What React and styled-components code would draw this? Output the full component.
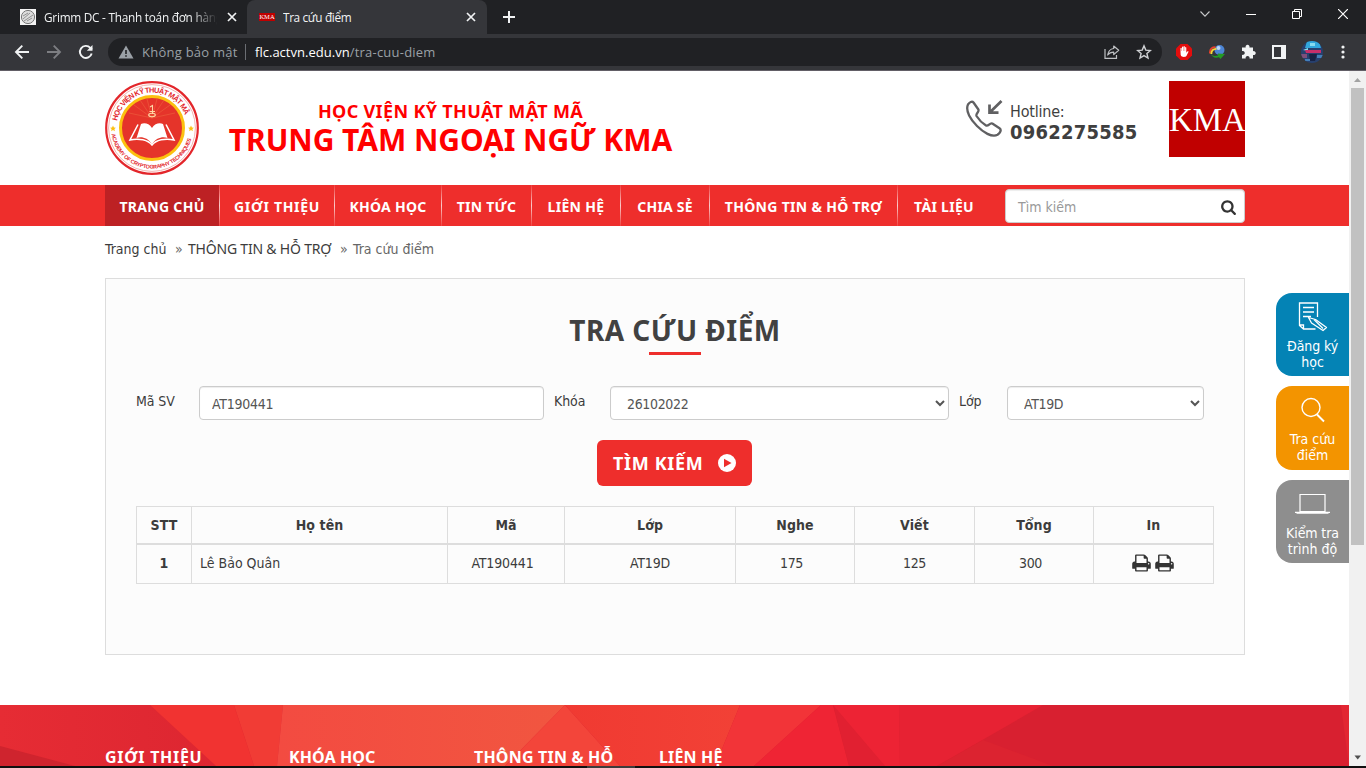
import React from 'react';
import styled, { createGlobalStyle } from 'styled-components';

const Global = createGlobalStyle`
  *, *::before, *::after { box-sizing: border-box; }
  body { margin: 0; background: #fff; overflow: hidden; }
`;

const TAHOMA = '"DejaVu Sans Condensed", "DejaVu Sans", "Noto Sans", sans-serif';
const CAPS = '"Noto Sans", "Open Sans", sans-serif';
const SEGOE = '"Open Sans", "Noto Sans", sans-serif';
const RED = '#ee2e2c';

const Screen = styled.div`
  width: 1366px;
  height: 768px;
  display: flex;
  flex-direction: column;
  overflow: hidden;
  font-family: ${TAHOMA};
  font-size: 14px;
  color: #3c3c3c;
`;

const T = styled.span`
  letter-spacing: ${(p) => p.$ls || 0}px;
  white-space: nowrap;
`;

/* ---------- browser chrome ---------- */
const TabStrip = styled.div`
  height: 34px;
  flex: none;
  display: flex;
  background: #202124;
  font-family: ${SEGOE};
  font-size: 11.8px;
  color: #f1f3f4;
`;
const Tab = styled.div`
  width: ${(p) => p.$w}px;
  height: 34px;
  display: flex;
  align-items: center;
  padding: 0 ${(p) => p.$pr}px 0 ${(p) => p.$pl}px;
  gap: 8px;
  background: ${(p) => (p.$active ? '#35363a' : 'transparent')};
  border-radius: 8px 8px 0 0;
`;
const TabTitle = styled.div`
  flex: 1;
  overflow: hidden;
  white-space: nowrap;
  line-height: 20px;
  margin-top: -1px;
  letter-spacing: ${(p) => p.$ls}px;
  ${(p) => p.$fade && 'mask-image: linear-gradient(90deg, #000 84%, transparent 99%);'}
`;
const KmaFavicon = styled.div`
  width: 16px;
  height: 8px;
  background: #c00000;
  color: #fff;
  font: 6.5px/8px "Liberation Serif", serif;
  text-align: center;
`;
const NewTab = styled.div`
  width: 44px;
  display: flex;
  align-items: center;
  justify-content: center;
`;
const WindowButtons = styled.div`
  margin-left: auto;
  display: flex;
  align-items: center;
  padding: 0 0 6px;
`;
const WindowButton = styled.div`
  width: 46px;
  display: flex;
  justify-content: center;
`;
const Toolbar = styled.div`
  height: 37px;
  flex: none;
  display: flex;
  align-items: center;
  padding: 0 15px 0 14px;
  background: #35363a;
  border-bottom: 1px solid #625e66;
`;
const NavButtons = styled.div`
  display: flex;
  gap: 16px;
  margin-right: 14px;
`;
const Omnibox = styled.div`
  width: 1054px;
  height: 28px;
  border-radius: 14px;
  background: #202124;
  display: flex;
  align-items: center;
  padding: 0 10px;
  font-family: ${SEGOE};
  font-size: 13px;
  color: #9aa0a6;
`;
const Host = styled(T)`color: #fff;`;
const InsecureLabel = styled(T)`margin-left: 8px; width: 97px;`;
const OmniDivider = styled.div`
  width: 1px;
  height: 16px;
  margin: 0 9px 0 6px;
  background: #6b6e73;
`;
const OmniActions = styled.div`
  margin-left: auto;
  display: flex;
  gap: 16px;
`;
const Extensions = styled.div`
  margin-left: 13px;
  display: flex;
  align-items: center;
  gap: 15.5px;
`;

/* ---------- page ---------- */
const Viewport = styled.div`
  flex: 1;
  min-height: 0;
  display: flex;
`;
const Page = styled.div`
  position: relative;
  width: 1349px;
  display: flex;
  flex-direction: column;
  overflow: hidden;
`;
const Container = styled.div`
  width: 1140px;
  margin-left: 105px;
`;
const Header = styled(Container)`
  height: 114px;
  flex: none;
  display: flex;
  padding-top: 10px;
`;
const Titles = styled.div`
  width: 503px;
  padding-top: 19px;
  text-align: center;
  color: #ff0000;
  font-weight: bold;
  font-family: ${CAPS};
`;
const Institute = styled.div`font-size: 18px; line-height: 22px;`;
const Centre = styled.div`font-size: 30px; line-height: 36px;`;
const Hotline = styled.div`
  width: 204px;
  margin-left: 263px;
  display: flex;
  gap: 7px;
  padding-top: 19px;
`;
const HotlineText = styled.div`
  color: #3f3f3f;
  font-size: 16px;
  line-height: 21px;
  padding-top: 1px;
  display: flex;
  flex-direction: column;
`;
const Phone = styled(T)`font-size: 20px; font-weight: bold;`;
const KmaLogo = styled.div`
  width: 76px;
  height: 76px;
  background: #c00000;
  color: #fff;
  font: 33px/78px "Liberation Serif", serif;
  letter-spacing: -.1px;
  text-align: center;
  white-space: nowrap;
`;

const MenuBar = styled.nav`
  height: 41px;
  flex: none;
  background: ${RED};
`;
const MenuRow = styled(Container)`
  display: flex;
  height: 41px;
`;
const MenuItem = styled.div`
  width: ${(p) => p.$w}px;
  display: flex;
  align-items: center;
  justify-content: center;
  padding-top: 2px;
  color: #fff;
  font-family: ${CAPS};
  font-weight: bold;
  background: ${(p) => (p.$active ? '#bd2124' : 'transparent')};
`;
const MenuDivider = styled.div`
  width: 1px;
  background: linear-gradient(rgba(255,255,255,.1), rgba(255,255,255,.75) 50%, rgba(255,255,255,.1));
`;
const SearchBox = styled.div`
  width: 240px;
  height: 34px;
  margin: 4px 0 0 auto;
  padding: 2px 8px 0 12px;
  display: flex;
  align-items: center;
  justify-content: space-between;
  background: #fff;
  border: 1px solid #ccc;
  border-radius: 4px;
  box-shadow: inset 0 1px 1px rgba(0,0,0,.075);
  color: #999;
`;
const Crumbs = styled(Container)`
  height: 52px;
  flex: none;
  display: flex;
  padding-top: 13px;
  line-height: 20px;
`;
const Crumb = styled(T)`
  width: ${(p) => p.$w}px;
  color: ${(p) => (p.$last ? '#666' : '#3c3c3c')};
  font-family: ${(p) => (p.$caps ? CAPS : TAHOMA)};
`;
const CrumbSep = styled.span`width: 13px; color: #666;`;

const Panel = styled(Container)`
  height: 377px;
  flex: none;
  background: #fcfcfc;
  border: 1px solid #ddd;
  padding: 0 30px;
`;
const Heading = styled.h1`
  margin: 0;
  height: 76px;
  padding-top: 31px;
  font-family: ${CAPS};
  font-size: 28px;
  line-height: 40px;
  color: #414141;
  display: flex;
  flex-direction: column;
  align-items: center;
  &::after {
    content: "";
    width: 52px;
    height: 3px;
    flex: none;
    margin-top: 2px;
    background: ${RED};
  }
`;
const Form = styled.div`
  display: flex;
  height: 34px;
  margin-top: 31px;
`;
const Label = styled.label`
  width: ${(p) => p.$w}px;
  padding-top: 5px;
  line-height: 20px;
  letter-spacing: -.1px;
`;
const controlCss = (p) => `
  width: ${p.$w}px;
  height: 34px;
  margin: 0 10px 0 0;
  padding: 8px 12px 6px;
  border: 1px solid #ccc;
  border-radius: 4px;
  background: #fff;
  box-shadow: inset 0 1px 1px rgba(0,0,0,.075);
  color: #555;
  font: 14px ${TAHOMA};
  letter-spacing: -.25px;
  outline: none;
`;
const Input = styled.input`${controlCss}`;
const Select = styled.select`${controlCss} padding: 7px 0 5px 12px; letter-spacing: -.35px;`;
const SubmitRow = styled.div`
  display: flex;
  justify-content: center;
  margin: 20px 0;
  padding-right: 1px;
`;
const Submit = styled.button`
  width: 155px;
  height: 46px;
  padding: 0 16px;
  display: flex;
  align-items: center;
  justify-content: space-between;
  border: 0;
  border-radius: 6px;
  background: ${RED};
  color: #fff;
  font: bold 18px/24px ${CAPS};
  svg { flex: none; }
`;
const Grid = styled.div`
  width: 1078px;
  display: grid;
  grid-template-columns: 55px 256px 117px 171px 119px 120px 119px 120px;
  border: 1px solid #ddd;
  border-width: 1px 0 0 1px;
`;
const Cell = styled.div`
  height: ${(p) => (p.$head ? 38 : 39)}px;
  display: flex;
  align-items: center;
  justify-content: ${(p) => (p.$left ? 'flex-start' : 'center')};
  padding: 0 ${(p) => p.$pr || 0}px ${(p) => (p.$head ? 1 : 3)}px ${(p) => (p.$left ? 8 : 0)}px;
  gap: 4px;
  font-weight: ${(p) => (p.$bold || p.$head ? 'bold' : 'normal')};
  border-right: 1px solid #ddd;
  border-bottom: ${(p) => (p.$head ? 2 : 1)}px solid #ddd;
`;

const SideTabs = styled.div`
  position: absolute;
  right: 0;
  top: 222px;
  display: flex;
  flex-direction: column;
  gap: 10px;
`;
const SideTab = styled.div`
  width: 73px;
  height: ${(p) => p.$h}px;
  padding-top: 7px;
  display: flex;
  flex-direction: column;
  align-items: center;
  border-radius: 16px 0 0 16px;
  background: ${(p) => p.$bg};
  color: #fff;
  line-height: 16px;
  svg { display: block; margin: 0 2px 4px 0; flex: none; }
`;

const Footer = styled.footer`
  position: relative;
  height: 61px;
  flex: none;
  margin-top: 50px;
`;
const FooterArt = styled.svg`
  position: absolute;
  inset: 0;
`;
const FooterRow = styled(Container)`
  position: relative;
  display: flex;
  padding-top: 42px;
  color: #fff;
  font-family: ${CAPS};
  font-weight: bold;
  font-size: 16px;
  line-height: 20px;
`;
const FooterCol = styled.div`width: ${(p) => p.$w}px;`;

const Scrollbar = styled.div`
  width: 17px;
  display: flex;
  flex-direction: column;
  align-items: center;
  background: #f1f1f1;
`;
const ScrollArrow = styled.svg`flex: none; display: block;`;
const Thumb = styled.div`width: 13px; height: 457px; background: #c1c1c1;`;
const ScrollGap = styled.div`flex: 1;`;
const Taskbar = styled.div`
  height: 2px;
  flex: none;
  background: linear-gradient(90deg, #101010 587px, #3c3c3c 587px 635px, #101010 635px);
`;

const Close = () => (
  <svg width="10" height="10" viewBox="0 0 10 10" stroke="#f1f3f4" strokeWidth="1.7"><path d="M1 1l8 8M9 1L1 9" /></svg>
);

const Emblem = () => (
  <svg width="94" height="94" viewBox="0 0 94 94" fontFamily="Liberation Sans, sans-serif" fontWeight="bold" fill="#e3262b">
    <circle cx="47" cy="47" r="45.800" fill="#fff" stroke="#e3262b" strokeWidth="2.200" />
    <circle cx="47" cy="47" r="43.400" fill="none" stroke="#f0a09c" strokeWidth=".8" />
    <circle cx="47" cy="47" r="31.500" fill="#e5342a" stroke="#fcc010" strokeWidth="3" />
    <g stroke="#ee6a42" strokeWidth=".5">
      <path d="M47 37L29 24M47 37L35 19M47 37L42 18M47 37L52 18M47 37L59 19M47 37L65 24M47 37L24 32M47 37L70 32" />
    </g>
    <path id="ringTop" d="M12.200 40A35.500 35.500 0 0 1 81.800 40" fill="none" />
    <path id="ringBottom" d="M6.500 53A41 41 0 0 0 87.500 53" fill="none" />
    <text fontSize="7.400"><textPath href="#ringTop" textLength="91">HỌC VIỆN KỸ THUẬT MẬT MÃ</textPath></text>
    <text fontSize="5.400"><textPath href="#ringBottom" textLength="111">ACADEMY OF CRYPTOGRAPHY TECHNIQUES</textPath></text>
    <path fill="#fcc010" d="M8 44.600l.9 1.900 2 .2-1.500 1.400.4 2.100L8 49.100l-1.800 1.100.4-2.100-1.500-1.400 2-.2zM86 44.600l.9 1.900 2 .2-1.500 1.400.4 2.100-1.800-1.100-1.800 1.100.4-2.100-1.500-1.400 2-.2z" />
    <path d="M45 26l2.500-1.500V33M44.500 30.500H50" fill="none" stroke="#ffd7a5" strokeWidth="1.100" />
    <ellipse cx="47" cy="34" rx="3.300" ry="1.700" fill="none" stroke="#ffd7a5" strokeWidth="1.100" />
    <path fill="#fff" d="M47 47c-3-5-8-5.500-11-4l-4.500 14c5-1.600 11-.5 15.500 6.500 4.500-7 10.500-8.100 15.500-6.500L58 43c-3-1.500-8-1-11 4z" />
    <path fill="none" stroke="#fff" strokeWidth="1.500" d="M33 43.500L25 59c9-2.200 18 0 22 5 4-5 13-7.200 22-5l-8-15.500" />
  </svg>
);

const HotlineIcon = () => (
  <svg width="38" height="38" viewBox="0 0 38 38" fill="none" stroke="#606062" strokeWidth="2.300" strokeLinejoin="round">
    <path d="M3 4.500C4.500 2.200 7 .8 8.500 2.500L13.400 9.500C14.500 12 10.500 13.500 11.500 16C14 20 17 23 21 25.500C23.500 26.800 24.500 22.500 27.300 23.500L34.500 28.200C37 30 35 33 32.500 34.800C27 38 18 32 12 26C6 20 0 11 3 4.500Z" />
    <path d="M36.500 1L25 12.300M24.500 4.500V12.700H33.500" strokeLinejoin="miter" strokeWidth="2.700" />
  </svg>
);

const SearchGlyph = () => (
  <svg width="15" height="16" viewBox="0 0 1664 1792" fill="#333"><path d="M1152 832q0-185-131.500-316.500t-316.500-131.500-316.500 131.500-131.500 316.500 131.500 316.500 316.500 131.500 316.500-131.500 131.500-316.500zM1664 1664q0 52-38 90t-90 38q-54 0-90-38l-343-342q-179 124-399 124-143 0-273.500-55.500t-225-150-150-225-55.500-273.500 55.500-273.500 150-225 225-150 273.500-55.500 273.500 55.500 225 150 150 225 55.500 273.500q0 220-124 399l343 343q37 37 37 90z" /></svg>
);

const PrintGlyph = () => (
  <svg width="19" height="20" viewBox="0 0 1664 1792" fill="#333"><path d="M384 1536h896v-256h-896v256zM384 896h896v-384h-160q-40 0-68-28t-28-68v-160h-640v640zM1536 960q0-26-19-45t-45-19-45 19-19 45 19 45 45 19 45-19 19-45zM1664 960v416q0 13-9.500 22.500t-22.500 9.500h-224v160q0 40-28 68t-68 28h-960q-40 0-68-28t-28-68v-160h-224q-13 0-22.500-9.500t-9.500-22.500v-416q0-79 56.500-135.500t135.500-56.500h64v-544q0-40 28-68t68-28h672q40 0 88 20t76 48l152 152q28 28 48 76t20 88v256h64q79 0 135.500 56.500t56.500 135.500z" /></svg>
);

const menu = [
  ['TRANG CHỦ', 114, 0.3], ['GIỚI THIỆU', 114, 0.7], ['KHÓA HỌC', 106, 0.25], ['TIN TỨC', 89, 0.25],
  ['LIÊN HỆ', 88, 0.3], ['CHIA SẺ', 88, 0.2], ['THÔNG TIN & HỖ TRỢ', 187, 0.3], ['TÀI LIỆU', 92, 0.3],
];
const columns = ['STT', 'Họ tên', 'Mã', 'Lớp', 'Nghe', 'Viết', 'Tổng', 'In'];

export default function App() {
  return (
    <Screen>
      <Global />
      <TabStrip>
        <Tab $w={247} $pl={20} $pr={10}>
          <svg width="16" height="16" viewBox="0 0 16 16"><path fill="#f4f4f4" d="M0 0h16v16H0z" /><circle cx="8" cy="8" r="6.600" fill="#ddd" stroke="#777" /><path d="M3 10l7-6M4 12l9-6M3 7l5-3M7 12l5-3" stroke="#888" strokeWidth=".9" /></svg>
          <TabTitle $fade $ls={-0.25}>Grimm DC - Thanh toán đơn hàng</TabTitle>
          <Close />
        </Tab>
        <Tab $active $w={240} $pl={12} $pr={11}>
          <KmaFavicon>KMA</KmaFavicon>
          <TabTitle $ls={-0.35}>Tra cứu điểm</TabTitle>
          <Close />
        </Tab>
        <NewTab>
          <svg width="12" height="12" viewBox="0 0 12 12" stroke="#f1f3f4" strokeWidth="2"><path d="M6 0v12M0 6h12" /></svg>
        </NewTab>
        <WindowButtons>
          <WindowButton><svg width="10" height="6" viewBox="0 0 10 6" fill="none" stroke="#c8c9cb" strokeWidth="1.100"><path d="M.5.5L5 5.200 9.500.5" /></svg></WindowButton>
          <WindowButton><svg width="10" height="2" viewBox="0 0 10 2"><path fill="#fff" d="M0 1h10v1H0z" /></svg></WindowButton>
          <WindowButton><svg width="10" height="10" viewBox="0 0 10 10" fill="none" stroke="#fff"><path d="M.5 2.500h7v7h-7zM2.500 2.500v-2h7v7h-2" /></svg></WindowButton>
          <WindowButton><svg width="10" height="10" viewBox="0 0 10 10" stroke="#fff" strokeWidth="1.200"><path d="M0 0l10 10M10 0L0 10" /></svg></WindowButton>
        </WindowButtons>
      </TabStrip>

      <Toolbar>
        <NavButtons>
          <svg width="16" height="16" viewBox="0 0 16 16" fill="none" stroke="#f1f3f4" strokeWidth="1.900"><path d="M15 8H2.500M8.300 1.700L2 8l6.300 6.300" /></svg>
          <svg width="16" height="16" viewBox="0 0 16 16" fill="none" stroke="#7d7e82" strokeWidth="1.900"><path d="M1 8h12.500M7.700 1.700L14 8l-6.300 6.300" /></svg>
          <svg width="16" height="16" viewBox="0 0 16 16" fill="none" stroke="#f1f3f4" strokeWidth="1.900"><path d="M13.700 9.500A6 6 0 1 1 12.300 3.800L14 5.500" /><path d="M14.500 1v5.700H8.800z" fill="#f1f3f4" stroke="none" /></svg>
        </NavButtons>
        <Omnibox>
          <svg width="16" height="14" viewBox="0 0 16 14"><path d="M8 .5L15.500 13.500H.5z" fill="#9aa0a6" /><path d="M7.200 5h1.600v4H7.200zM7.200 10.200h1.600v1.600H7.200z" fill="#202124" /></svg>
          <InsecureLabel $ls={0.25}>Không bảo mật</InsecureLabel>
          <OmniDivider />
          <Host $ls={0.02}>flc.actvn.edu.vn</Host>
          <T $ls={0.22}>/tra-cuu-diem</T>
          <OmniActions>
            <svg width="16" height="16" viewBox="0 0 16 16" fill="none" stroke="#bfc1c4" strokeWidth="1.200"><path d="M1 5v9.400h11.500V11" /><path d="M9.700 2l5 4.300-5 4.300V8.200C6.500 8.200 5 9.200 3.700 11 4.200 7.500 6 5 9.700 4.500z" strokeLinejoin="round" /></svg>
            <svg width="16" height="16" viewBox="0 0 16 16" fill="none" stroke="#cfd1d4" strokeWidth="1.400"><path d="M8 1.900l1.800 4.200 4.600.4-3.500 3 1.100 4.500L8 11.600 4 14l1.100-4.500-3.500-3 4.600-.4z" /></svg>
          </OmniActions>
        </Omnibox>
        <Extensions>
          <svg width="18" height="18" viewBox="0 0 18 18"><path fill="#e40d0d" d="M5.500 1h7L17 5.500v7L12.500 17h-7L1 12.500v-7z" /><path fill="#fff" d="M5.500 8.500V5.400c0-.8 1.200-.8 1.200 0V8h.3V4.200c0-.8 1.200-.8 1.200 0V8h.3V3.700c0-.8 1.300-.8 1.300 0V8h.3V4.700c0-.8 1.200-.8 1.200 0v5l1-1.200c.7-.7 1.500-.1 1.100.5L11.400 13c-.6 1.200-5 1.500-5.700-1z" /></svg>
          <svg width="16" height="16" viewBox="0 0 16 16"><circle cx="10.500" cy="6" r="5" fill="#4d86d6" /><circle cx="9.500" cy="4" r="2" fill="#bcd7f5" /><path d="M.8 9.500C.8 5.500 3 3.200 6.500 3.200" fill="none" stroke="#e8412c" strokeWidth="1.700" /><path d="M2.300 10C2.300 7 4 4.900 7.500 4.900" fill="none" stroke="#f7d735" strokeWidth="1.900" /><path d="M1.500 9c1 3 4 3.500 7.500 2.500V9.500l7 .5-4.500 5-1.500-1.700c-4 1-7 .2-8.500-4.300z" fill="#249a24" /></svg>
          <svg width="16" height="16" viewBox="0 0 16 16" fill="#f1f3f4"><path d="M2 3.500h3.700a2 2 0 1 1 3.700 0H13v3.700a2 2 0 1 1 0 3.700v3.600H9.500a2 2 0 1 0-3.800 0H2v-3.700a2 2 0 1 0 0-3.700z" /></svg>
          <svg width="14" height="14" viewBox="0 0 14 14"><path fill="#f1f3f4" fillRule="evenodd" d="M0 0h14v14H0zM2 2v10h7V2z" /></svg>
          <svg width="22" height="22" viewBox="0 0 22 22"><clipPath id="avatar"><circle cx="11" cy="11" r="11" /></clipPath><g clipPath="url(#avatar)"><path fill="#27406e" d="M0 0h22v22H0z" /><path fill="#31a8dd" d="M6 0h12l2 7H4z" /><path fill="#86dcf0" d="M9 2h5v3H9zM2 9l5-2v3z" /><path fill="#c82f6b" d="M4 9h16v3H5z" /><path fill="#182344" d="M8 13h8l-2 7H9z" /><path fill="#7d4e7b" d="M0 13h6v4H0z" /><path fill="#447fb8" d="M16 14h6v3h-6zM4 18h5v2H4z" /></g></svg>
          <svg width="6" height="14" viewBox="-2 0 6 14" fill="#f1f3f4"><circle cx="2" cy="2" r="1.600" /><circle cx="2" cy="7" r="1.600" /><circle cx="2" cy="12" r="1.600" /></svg>
        </Extensions>
      </Toolbar>

      <Viewport>
        <Page>
          <Header>
            <Emblem />
            <Titles>
              <Institute><T $ls={0.35}>HỌC VIỆN KỸ THUẬT MẬT MÃ</T></Institute>
              <Centre><T $ls={-0.05}>TRUNG TÂM NGOẠI NGỮ KMA</T></Centre>
            </Titles>
            <Hotline>
              <HotlineIcon />
              <HotlineText>
                <T $ls={-0.2}>Hotline:</T>
                <Phone $ls={0.22}>0962275585</Phone>
              </HotlineText>
            </Hotline>
            <KmaLogo>KMA</KmaLogo>
          </Header>

          <MenuBar>
            <MenuRow>
              {menu.map(([label, w, ls], i) => (
                <React.Fragment key={label}>
                  {i > 0 && <MenuDivider />}
                  <MenuItem $w={w} $active={i === 0}><T $ls={ls}>{label}</T></MenuItem>
                </React.Fragment>
              ))}
              <SearchBox><T>Tìm kiếm</T><SearchGlyph /></SearchBox>
            </MenuRow>
          </MenuBar>

          <Crumbs>
            <Crumb $w={70}>Trang chủ</Crumb>
            <CrumbSep>»</CrumbSep>
            <Crumb $w={152} $caps $ls={-0.2}>THÔNG TIN & HỖ TRỢ</Crumb>
            <CrumbSep>»</CrumbSep>
            <Crumb $w={90} $last>Tra cứu điểm</Crumb>
          </Crumbs>

          <Panel>
            <Heading><T $ls={0.45}>TRA CỨU ĐIỂM</T></Heading>
            <Form>
              <Label $w={63}>Mã SV</Label>
              <Input $w={345} defaultValue="AT190441" />
              <Label $w={56}>Khóa</Label>
              <Select $w={339}><option>26102022</option></Select>
              <Label $w={48}>Lớp</Label>
              <Select $w={197}><option>AT19D</option></Select>
            </Form>
            <SubmitRow>
              <Submit>
                <T $ls={0.65}>TÌM KIẾM</T>
                <svg width="18" height="18" viewBox="0 0 18 18"><circle cx="9" cy="9" r="9" fill="#fff" /><path d="M6 4.700l7.500 4.300L6 13.300z" fill={RED} /></svg>
              </Submit>
            </SubmitRow>
            <Grid>
              {columns.map((c) => <Cell key={c} $head><T $ls={0.1}>{c}</T></Cell>)}
              <Cell $bold>1</Cell>
              <Cell $left><T>Lê Bảo Quân</T></Cell>
              <Cell $pr={7}><T $ls={-0.15}>AT190441</T></Cell>
              <Cell><T $ls={-0.15}>AT19D</T></Cell>
              <Cell $pr={7}><T $ls={-0.3}>175</T></Cell>
              <Cell><T $ls={-0.3}>125</T></Cell>
              <Cell $pr={7}><T $ls={-0.3}>300</T></Cell>
              <Cell $pr={1}><PrintGlyph /><PrintGlyph /></Cell>
            </Grid>
          </Panel>

          <Footer>
            <FooterArt width="1349" height="61" viewBox="0 705 1349 61" preserveAspectRatio="none">
              <defs>
                <linearGradient id="deep"><stop stopColor="#e62c34" /><stop offset="1" stopColor="#dd2631" /></linearGradient>
                <linearGradient id="coral"><stop stopColor="#f34b41" /><stop offset="1" stopColor="#f15640" /></linearGradient>
                <linearGradient id="warm"><stop stopColor="#f03a32" /><stop offset="1" stopColor="#f24136" /></linearGradient>
              </defs>
              <path fill="#d82030" d="M0 705h1349v61H0z" />
              <path fill="url(#deep)" d="M0 705h150l66 61H0z" />
              <path fill="#cf242e" d="M0 746l75 20H0z" />
              <path fill="#f13331" d="M150 705h84l20 61h-38z" />
              <path fill="#f13c35" d="M234 705h49l-6 61h-23z" />
              <path fill="url(#coral)" d="M283 705h282l-60 61H277z" />
              <path fill="#f3453a" d="M565 705l55 61H505z" />
              <path fill="url(#warm)" d="M565 705h175l-25 61h-95z" />
              <path fill="#f23438" d="M740 705h81l-67 61h-39z" />
              <path fill="#ef2434" d="M821 705h12l16 61h-95z" />
              <path fill="#e12031" d="M833 705l52 61h-36z" />
              <path fill="#ed2334" d="M833 705h66l1 61h-15z" />
              <path fill="#e72233" d="M899 705h144l-106 61h-37z" />
              <path fill="#dc2330" d="M983 740l70 26H937z" />
              <path fill="#e22632" d="M1341 705h8v61z" />
            </FooterArt>
            <FooterRow>
              <FooterCol $w={184}><T $ls={0.7}>GIỚI THIỆU</T></FooterCol>
              <FooterCol $w={185}><T $ls={0.1}>KHÓA HỌC</T></FooterCol>
              <FooterCol $w={185}><T $ls={0.2}>THÔNG TIN & HỖ</T></FooterCol>
              <FooterCol $w={185}><T $ls={0.15}>LIÊN HỆ</T></FooterCol>
            </FooterRow>
          </Footer>

          <SideTabs>
            <SideTab $h={83} $bg="#0483b5">
              <svg width="34" height="34" viewBox="1 0 34 34" fill="none" stroke="#fff" strokeWidth="1.300"><path d="M23.500 17V3H5.500v22.500l4 3.500h12M5.500 25h4v4M9 7.500h11M9 12h11M9 16.500h8" /><path d="M14.500 17.500l3 5.500L29 30.500l3.500-3-11-8z" fill="#0483b5" strokeLinejoin="round" /><path d="M20 19.500l9 9" /></svg>
              <T $ls={-0.1}>Đăng ký</T><T>học</T>
            </SideTab>
            <SideTab $h={84} $bg="#f39400">
              <svg width="34" height="34" viewBox="0 0 34 34" fill="none" stroke="#fff" strokeWidth="1.400"><circle cx="16" cy="14.500" r="9" /><path d="M22 21.500l7 7" strokeWidth="1.900" /></svg>
              <T>Tra cứu</T><T>điểm</T>
            </SideTab>
            <SideTab $h={83} $bg="#8e8e8e">
              <svg width="36" height="34" viewBox="-.5 0 36 34" fill="none" stroke="#fff" strokeWidth="1.200"><path d="M5.500 7.500h25v17h-25zM.5 25.300h35" /><path d="M2 26h32" strokeWidth="1.500" /></svg>
              <T $ls={-0.1}>Kiểm tra</T><T>trình độ</T>
            </SideTab>
          </SideTabs>
        </Page>
        <Scrollbar>
          <ScrollArrow width="17" height="17" viewBox="0 0 17 17"><path d="M5 11h7L8.500 7z" fill="#a3a3a3" /></ScrollArrow>
          <Thumb />
          <ScrollGap />
          <ScrollArrow width="17" height="17" viewBox="0 0 17 17"><path d="M5.500 6.500h6.500L8.700 10.500z" fill="#505050" /></ScrollArrow>
        </Scrollbar>
      </Viewport>
      <Taskbar />
    </Screen>
  );
}
